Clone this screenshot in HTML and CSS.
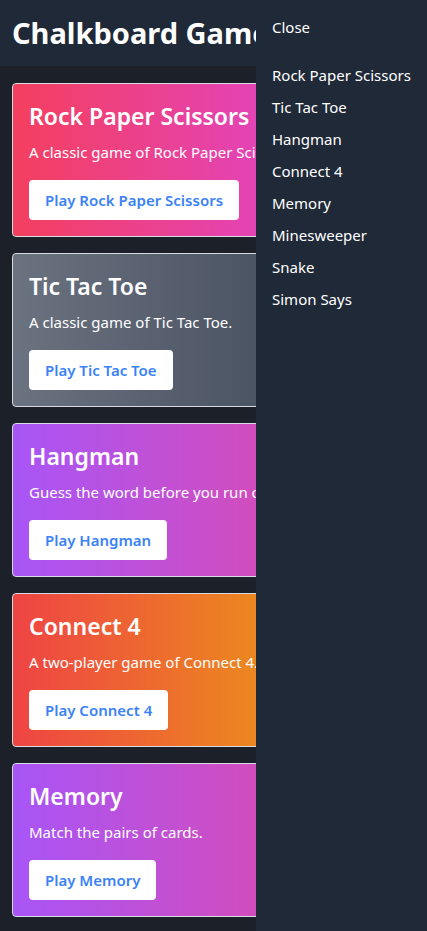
FILE: index.html
```html
<!DOCTYPE html>
<html lang="en">
<head>
<meta charset="utf-8">
<title>Chalkboard Games</title>
<link rel="stylesheet" href="styles.css">
</head>
<body>
<header class="topbar">
  <h1 class="brand">Chalkboard Games</h1>
</header>
<main class="games">
  <section class="card card-rps">
    <h2 class="card-title">Rock Paper Scissors</h2>
    <p class="card-desc">A classic game of Rock Paper Scissors.</p>
    <a class="play-btn" href="#">Play Rock Paper Scissors</a>
  </section>
  <section class="card card-ttt">
    <h2 class="card-title">Tic Tac Toe</h2>
    <p class="card-desc">A classic game of Tic Tac Toe.</p>
    <a class="play-btn" href="#">Play Tic Tac Toe</a>
  </section>
  <section class="card card-hang">
    <h2 class="card-title">Hangman</h2>
    <p class="card-desc">Guess the word before you run out of guesses.</p>
    <a class="play-btn" href="#">Play Hangman</a>
  </section>
  <section class="card card-c4">
    <h2 class="card-title">Connect 4</h2>
    <p class="card-desc">A two-player game of Connect 4.</p>
    <a class="play-btn" href="#">Play Connect 4</a>
  </section>
  <section class="card card-mem">
    <h2 class="card-title">Memory</h2>
    <p class="card-desc">Match the pairs of cards.</p>
    <a class="play-btn" href="#">Play Memory</a>
  </section>
</main>
<nav class="drawer">
  <a class="drawer-close" href="#">Close</a>
  <ul class="drawer-list">
    <li><a href="#">Rock Paper Scissors</a></li>
    <li><a href="#">Tic Tac Toe</a></li>
    <li><a href="#">Hangman</a></li>
    <li><a href="#">Connect 4</a></li>
    <li><a href="#">Memory</a></li>
    <li><a href="#">Minesweeper</a></li>
    <li><a href="#">Snake</a></li>
    <li><a href="#">Simon Says</a></li>
  </ul>
</nav>
</body>
</html>
```
FILE: styles.css
```css
* { box-sizing: border-box; }
html, body { margin: 0; padding: 0; }
body {
  background: #1b2029;
  color: #fff;
  font-family: "Noto Sans", "Open Sans", sans-serif;
  font-size: 16px;
  line-height: 24px;
  overflow: hidden;
  height: 931px;
}
.topbar {
  background: #1f2937;
  height: 66px;
  padding: 15px 12px;
}
.brand {
  margin: 0;
  font-size: 29px;
  line-height: 36px;
  font-weight: 700;
  white-space: nowrap;
}
.games {
  display: flex;
  flex-direction: column;
  gap: 16px;
  padding: 17px 12px;
}
.card {
  border: 1px solid #d7dae0;
  border-radius: 4px;
  padding: 16px;
  display: flex;
  flex-direction: column;
  align-items: flex-start;
}
.card-rps { background: linear-gradient(90deg, #f43f5e, #d946ef); }
.card-ttt { background: linear-gradient(90deg, #6b7280, #374151); }
.card-hang { background: linear-gradient(90deg, #a855f7, #ec4899); }
.card-c4 { background: linear-gradient(90deg, #ef4444, #eab308); }
.card-mem { background: linear-gradient(90deg, #a855f7, #ec4899); }
.card-title {
  margin: 0;
  font-size: 23px;
  line-height: 32px;
  font-weight: 600;
  white-space: nowrap;
}
.card-desc {
  margin: 8px 0 0;
  font-size: 15px;
  white-space: nowrap;
}
.play-btn {
  margin-top: 16px;
  background: #fff;
  color: #3b82f6;
  text-decoration: none;
  font-weight: 600;
  font-size: 15px;
  line-height: 24px;
  padding: 8px 16px;
  border-radius: 4px;
  white-space: nowrap;
}
.drawer {
  position: fixed;
  top: 0;
  right: 0;
  width: 171px;
  height: 100%;
  background: #1f2937;
  padding: 15px 16px;
  font-size: 15px;
}
.drawer a { color: #fff; text-decoration: none; }
.drawer-close { display: block; line-height: 24px; margin-bottom: 24px; }
.drawer-list {
  list-style: none;
  margin: 0;
  padding: 0;
  display: flex;
  flex-direction: column;
  gap: 8px;
}
.drawer-list li { line-height: 24px; white-space: nowrap; }
```
